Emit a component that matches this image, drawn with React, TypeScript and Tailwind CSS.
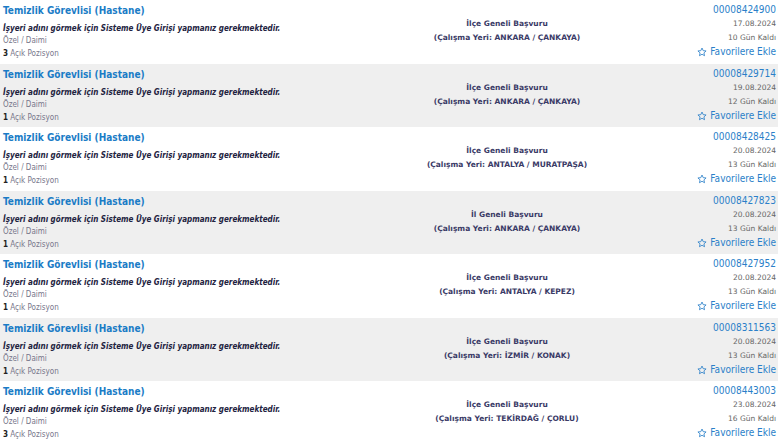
const jobs = [
  { ilan: "00008424900", tarih: "17.08.2024", kalan: "10 Gün Kaldı", kapsam: "İlçe Geneli Başvuru", yer: "ANKARA / ÇANKAYA", adet: 3 },
  { ilan: "00008429714", tarih: "19.08.2024", kalan: "12 Gün Kaldı", kapsam: "İlçe Geneli Başvuru", yer: "ANKARA / ÇANKAYA", adet: 1 },
  { ilan: "00008428425", tarih: "20.08.2024", kalan: "13 Gün Kaldı", kapsam: "İlçe Geneli Başvuru", yer: "ANTALYA / MURATPAŞA", adet: 1 },
  { ilan: "00008427823", tarih: "20.08.2024", kalan: "13 Gün Kaldı", kapsam: "İl Geneli Başvuru", yer: "ANKARA / ÇANKAYA", adet: 1 },
  { ilan: "00008427952", tarih: "20.08.2024", kalan: "13 Gün Kaldı", kapsam: "İlçe Geneli Başvuru", yer: "ANTALYA / KEPEZ", adet: 1 },
  { ilan: "00008311563", tarih: "20.08.2024", kalan: "13 Gün Kaldı", kapsam: "İlçe Geneli Başvuru", yer: "İZMİR / KONAK", adet: 1 },
  { ilan: "00008443003", tarih: "23.08.2024", kalan: "16 Gün Kaldı", kapsam: "İlçe Geneli Başvuru", yer: "TEKİRDAĞ / ÇORLU", adet: 3 },
];

function Star() {
  return (
    <svg width="10" height="10" viewBox="0 0 24 24" fill="none" className="mr-[3px]">
      <path
        d="M12 2.5l2.9 6.3 6.9.7-5.2 4.6 1.5 6.8L12 17.4l-6.1 3.5 1.5-6.8-5.2-4.6 6.9-.7z"
        stroke="currentColor"
        strokeWidth="2"
        strokeLinejoin="round"
      />
    </svg>
  );
}

export default function App() {
  return (
    <div className="w-[778px] h-[445px] overflow-hidden bg-white font-['DejaVu_Sans_Condensed','DejaVu_Sans',sans-serif]">
      {jobs.map((job, i) => (
        <div
          key={job.ilan}
          className={`grid h-[63.57px] grid-cols-[380px_254px_1fr] ${i % 2 === 1 ? "bg-[#efefef]" : "bg-white"}`}
        >
          <div className="flex flex-col pl-[3px] pt-[3px]">
            <a className="block h-[15px] text-[10px] font-bold leading-[15px] text-[#1a7cc6]">Temizlik Görevlisi (Hastane)</a>
            <p className="mt-[5px] h-[11px] text-[8px] font-bold italic leading-[12px] text-[#23233f]">
              İşyeri adını görmek için Sisteme Üye Girişi yapmanız gerekmektedir.
            </p>
            <p className="h-[13px] text-[8px] leading-[13px] text-[#77768a]">Özel / Daimi</p>
            <p className="h-[13px] text-[8px] leading-[13px] text-[#77768a]">
              <b className="text-[#222]">{job.adet}</b> Açık Pozisyon
            </p>
          </div>

          <div className="flex flex-col items-center pt-[17px] font-['DejaVu_Sans',sans-serif] text-[7.5px] font-bold text-[#3a3a66]">
            <span className="block h-[14px] leading-[14px]">{job.kapsam}</span>
            <span className="block h-[14px] leading-[14px]">(Çalışma Yeri: {job.yer})</span>
          </div>

          <div className="flex flex-col items-end pr-[2px] pt-[3px]">
            <a className="block h-[14px] text-[10px] leading-[14px] text-[#2a7fc9]">{job.ilan}</a>
            <span className="block h-[14px] font-['DejaVu_Sans',sans-serif] text-[7.5px] leading-[14px] text-[#666]">{job.tarih}</span>
            <span className="block h-[14px] font-['DejaVu_Sans',sans-serif] text-[7.5px] leading-[14px] text-[#666]">{job.kalan}</span>
            <a className="flex h-[14px] items-center text-[10px] leading-[14px] text-[#2a7fc9]">
              <Star />
              Favorilere Ekle
            </a>
          </div>
        </div>
      ))}
    </div>
  );
}
